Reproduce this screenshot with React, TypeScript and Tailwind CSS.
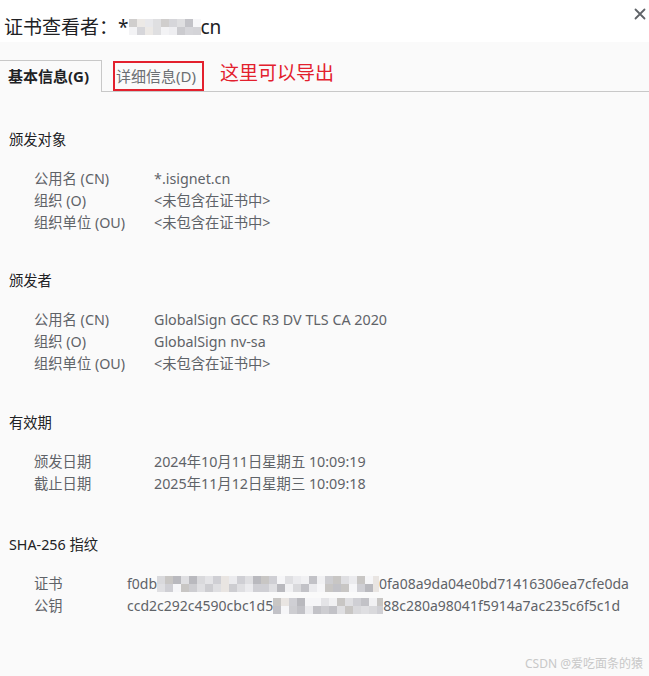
import React from "react";

const SHADES = ["#e4e4e7", "#cfcfd4", "#f1f1f3", "#c2c2c7", "#d9d9dc", "#ebebee", "#b9b9be", "#f6f6f8", "#cdcdd1", "#dfdfe2", "#c8c6c4", "#e9e5e2"];

function Mosaic({ w, h, cell, seed, light }: { w: number; h: number; cell: number; seed: number; light?: boolean }) {
  let s = seed;
  const rnd = () => {
    s = (s * 9301 + 49297) % 233280;
    return s / 233280;
  };
  const rects: React.ReactNode[] = [];
  const cols = Math.ceil(w / cell);
  const rows = Math.ceil(h / cell);
  for (let r = 0; r < rows; r++) {
    for (let c = 0; c < cols; c++) {
      const fill = SHADES[Math.floor(rnd() * SHADES.length)];
      rects.push(<rect key={`${r}-${c}`} x={c * cell} y={r * cell} width={cell} height={cell} fill={fill} opacity={light ? 0.85 : 1} />);
    }
  }
  return (
    <svg width={w} height={h} viewBox={`0 0 ${w} ${h}`} className="inline-block align-middle">
      {rects}
    </svg>
  );
}

type Row = { label: string; value: React.ReactNode; mono?: boolean };

function Section({ title, rows, labelW, pt }: { title: string; rows: Row[]; labelW: string; pt: string }) {
  return (
    <div className={pt}>
      <div className="px-[9px] text-[14.3px] leading-[20px] text-[#202124]">{title}</div>
      <div className="mt-[18px] pl-[34px]">
        {rows.map((r) => (
          <div key={r.label} className="flex h-[22px] items-center text-[14.3px] leading-[22px] text-[#5f6368]">
            <div className={`${labelW} shrink-0`}>{r.label}</div>
            <div className={r.mono ? "whitespace-nowrap text-[14px]" : "whitespace-nowrap"}>{r.value}</div>
          </div>
        ))}
      </div>
    </div>
  );
}

export default function App() {
  const notIncluded = "<未包含在证书中>";
  return (
    <div
      className="relative h-[676px] w-[649px] overflow-hidden bg-[#fafafa]"
      style={{ fontFamily: '"Noto Sans", "Noto Sans CJK SC", sans-serif' }}
    >
      {/* title bar */}
      <div className="flex h-[42px] items-start justify-between bg-white pl-[4px] pr-[3px]">
        <div className="mt-[14px] flex items-center text-[19px] leading-[26px] text-[#202124]">
          <span>证书查看者：</span>
          <span>*</span>
          <Mosaic w={72} h={16} cell={8} seed={17} light />
          <span>cn</span>
        </div>
        <svg width="12" height="12" viewBox="0 0 12 12" className="mt-[8px]">
          <path d="M1.5 1.5 L10.5 10.5 M10.5 1.5 L1.5 10.5" stroke="#5f6368" strokeWidth="1.8" strokeLinecap="round" />
        </svg>
      </div>

      {/* tabs */}
      <div className="flex h-[50px] items-end">
        <div className="flex h-[32px] items-center border-r border-t border-[#c8c8c8] pl-[8px] pr-[12px] text-[15px] font-bold text-[#202124]">
          基本信息(G)
        </div>
        <div className="flex h-[32px] flex-1 items-end border-b border-[#c8c8c8]">
          <div className="ml-[11px] flex h-[30px] items-center border-2 border-[#e3202d] pl-[1px] pr-[6px] text-[15px] text-[#6b6e72]">
            详细信息(D)
          </div>
          <div className="mb-[6px] ml-[16px] self-center text-[19px] leading-[24px] text-[#e3202d]">这里可以导出</div>
        </div>
      </div>

      <Section
        pt="pt-[38px]"
        title="颁发对象"
        labelW="w-[120px]"
        rows={[
          { label: "公用名 (CN)", value: "*.isignet.cn" },
          { label: "组织 (O)", value: notIncluded },
          { label: "组织单位 (OU)", value: notIncluded },
        ]}
      />
      <Section
        pt="pt-[37px]"
        title="颁发者"
        labelW="w-[120px]"
        rows={[
          { label: "公用名 (CN)", value: "GlobalSign GCC R3 DV TLS CA 2020" },
          { label: "组织 (O)", value: "GlobalSign nv-sa" },
          { label: "组织单位 (OU)", value: notIncluded },
        ]}
      />
      <Section
        pt="pt-[38px]"
        title="有效期"
        labelW="w-[120px]"
        rows={[
          { label: "颁发日期", value: "2024年10月11日星期五 10:09:19" },
          { label: "截止日期", value: "2025年11月12日星期三 10:09:18" },
        ]}
      />
      <Section
        pt="pt-[40px]"
        title="SHA-256 指纹"
        labelW="w-[93px]"
        rows={[
          {
            label: "证书",
            mono: true,
            value: (
              <span className="flex items-center">
                <span>f0db</span>
                <Mosaic w={222} h={16} cell={8} seed={5} />
                <span>0fa08a9da04e0bd71416306ea7cfe0da</span>
              </span>
            ),
          },
          {
            label: "公钥",
            mono: true,
            value: (
              <span className="flex items-center">
                <span>ccd2c292c4590cbc1d5</span>
                <Mosaic w={110} h={16} cell={8} seed={41} />
                <span>88c280a98041f5914a7ac235c6f5c1d</span>
              </span>
            ),
          },
        ]}
      />

      <div className="absolute bottom-[4px] right-[6px] text-[12px] leading-[16px] text-[#c8c8c8]">CSDN @爱吃面条的猿</div>
    </div>
  );
}
